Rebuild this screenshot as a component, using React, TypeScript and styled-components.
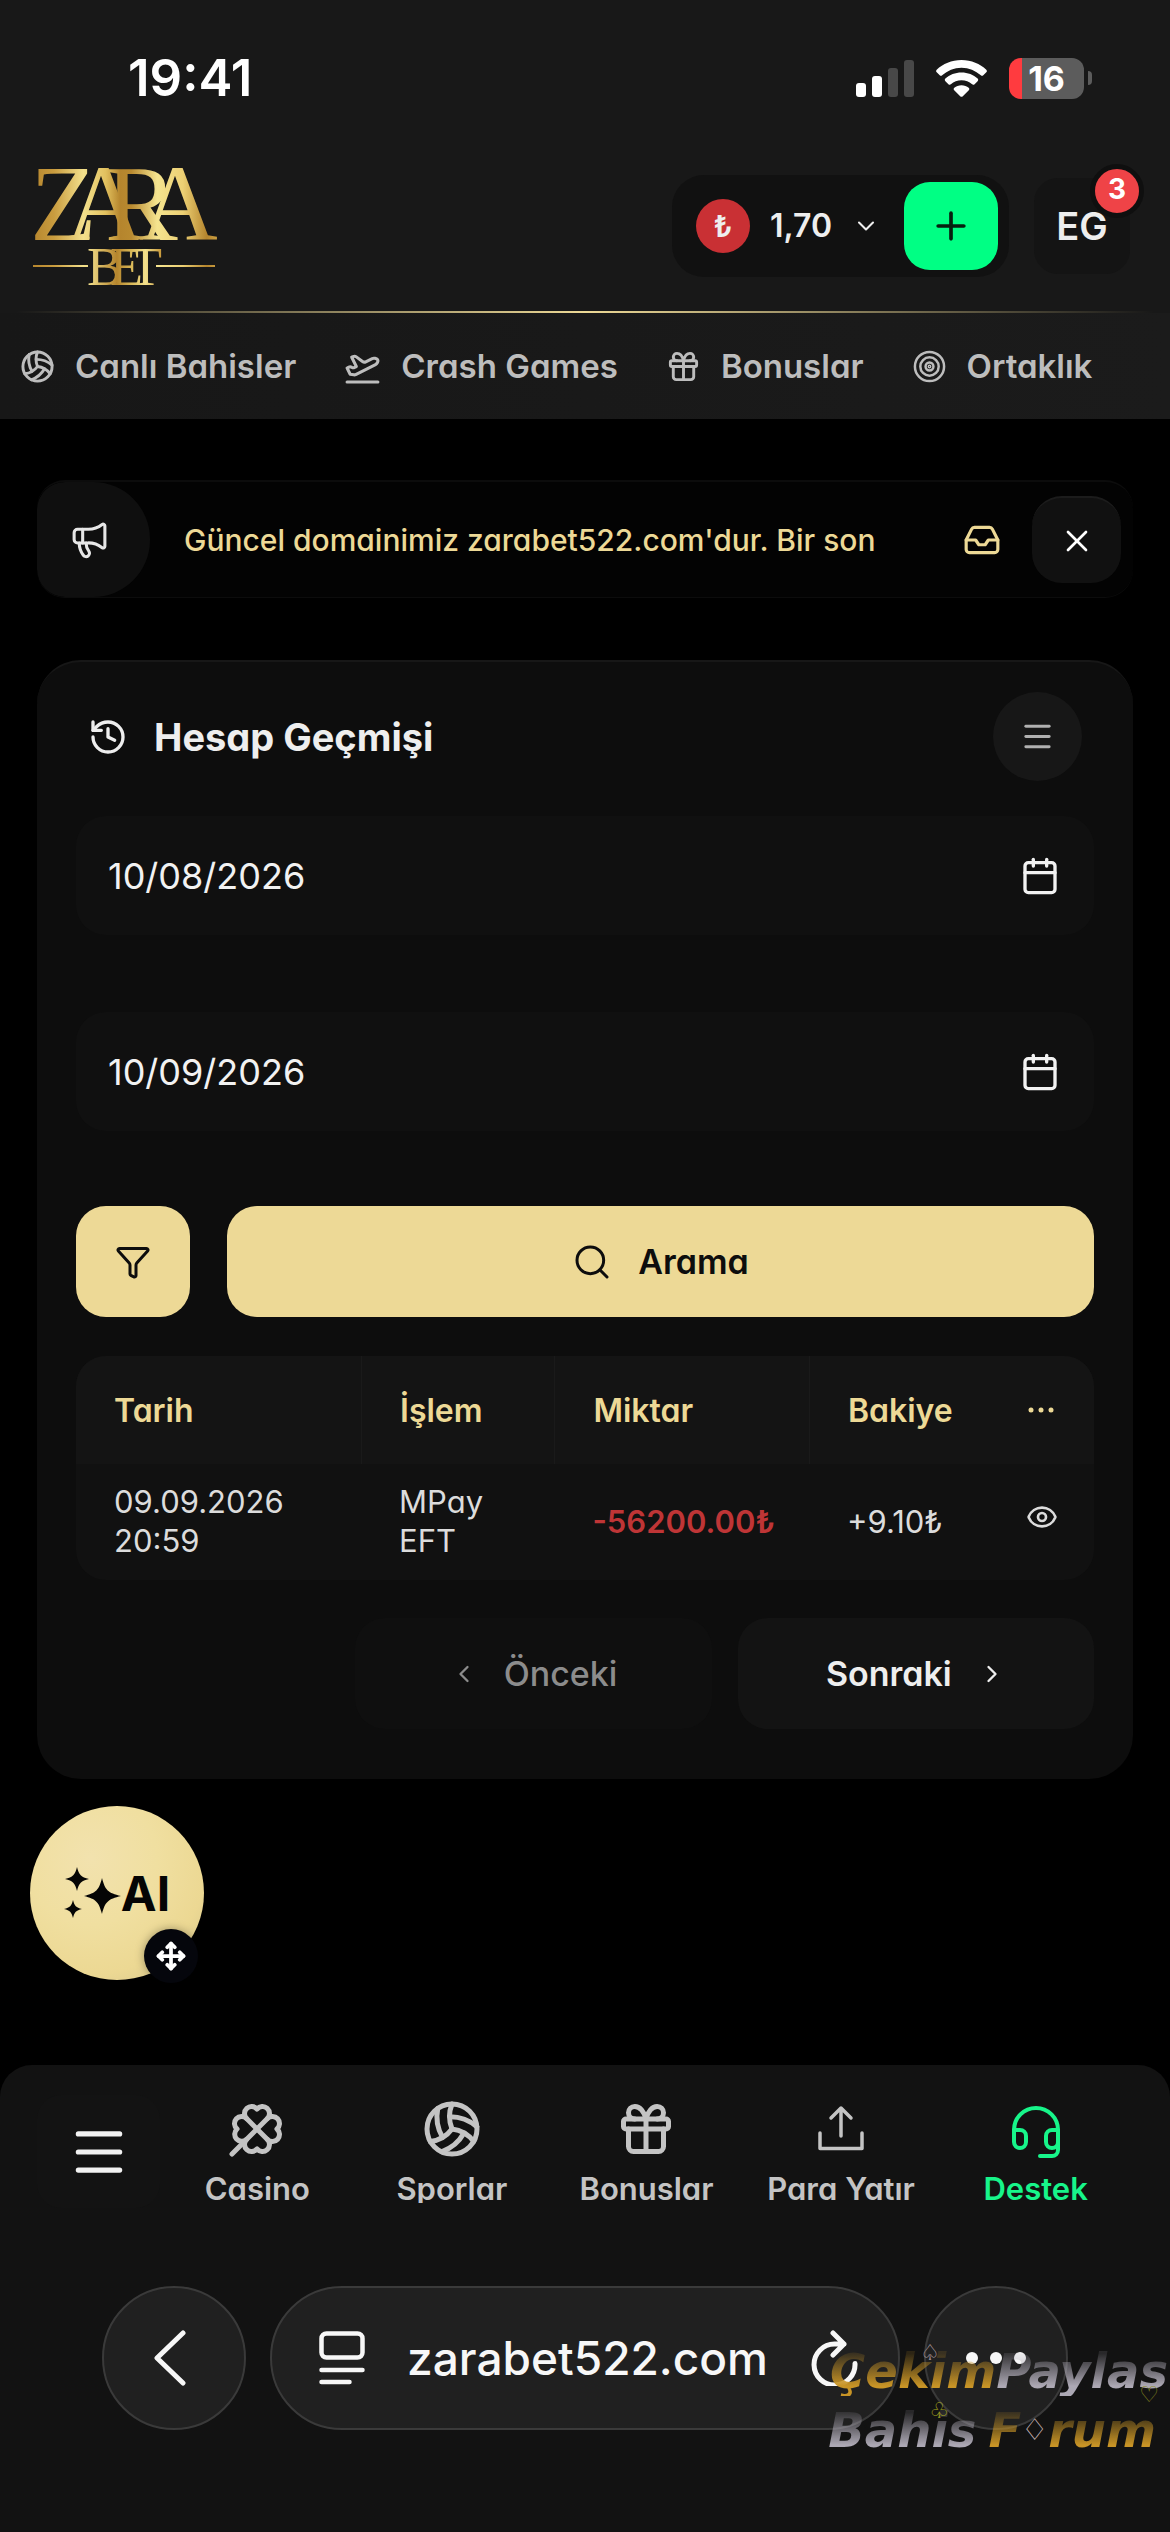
import React from "react";
import styled, { createGlobalStyle, css } from "styled-components";
import {
  Calendar,
  ChevronDown,
  ChevronLeft,
  ChevronRight,
  Clover,
  Eye,
  Funnel,
  Gift,
  History,
  Inbox,
  Megaphone,
  Menu,
  Move,
  PlaneTakeoff,
  Plus,
  Search,
  Volleyball,
  X,
} from "lucide-react";

const gold = "#edd996";
const green = "#00ff84";

const GlobalStyle = createGlobalStyle`
  *, *::before, *::after { box-sizing: border-box; }
  body {
    margin: 0;
    background: #000;
    color: #eee;
    font-family: Inter, "Liberation Sans", sans-serif;
    font-feature-settings: "cv11";
  }
  button, input {
    font: inherit;
    font-feature-settings: inherit;
    color: inherit;
    border: 0;
    padding: 0;
    margin: 0;
    background: none;
  }
  button { cursor: pointer; }
  a { color: inherit; text-decoration: none; }
  svg { display: block; flex: none; }
`;

const Page = styled.div`
  min-height: 100vh;
  display: flex;
  flex-direction: column;
  overflow: hidden;
`;

/* ---------- top ---------- */

const Top = styled.header`
  background: #181818;
`;

const StatusBar = styled.div`
  height: 140px;
  padding: 16px 78px 0 128px;
  display: flex;
  align-items: center;
  justify-content: space-between;
`;

const Clock = styled.span`
  font-size: 51px;
  font-weight: 600;
  line-height: 60px;
  color: #fff;
  font-feature-settings: normal;
`;

const StatusIcons = styled.div`
  display: flex;
  align-items: center;
  gap: 22px;
`;

const Battery = styled.div`
  display: flex;
  align-items: center;
  gap: 4px;
  &::after {
    content: "";
    width: 4px;
    height: 14px;
    border-radius: 0 8px 8px 0;
    background: #5c5c5c;
  }
`;

const BatteryBody = styled.div`
  width: 75px;
  height: 41px;
  border-radius: 12px;
  display: flex;
  align-items: center;
  justify-content: center;
  background: linear-gradient(90deg, #ff3b3f 13px, #5c5c5c 13px);
  color: #fff;
  font-size: 34px;
  font-weight: 700;
  line-height: 41px;
`;

const Bar = styled.div`
  height: 171px;
  padding: 0 40px 0 24px;
  display: flex;
  align-items: center;
  gap: 25px;
`;

const LogoLink = styled.a`
  margin-right: auto;
`;

const Wallet = styled.div`
  height: 102px;
  padding: 0 11px 0 24px;
  border-radius: 32px;
  background: #111;
  display: flex;
  align-items: center;
  gap: 24px;
`;

const Balance = styled.button`
  display: flex;
  align-items: center;
  gap: 20px;
  color: #eee;
  font-size: 32px;
  font-weight: 600;
`;

const Coin = styled.span`
  width: 54px;
  height: 54px;
  border-radius: 50%;
  background: #c93034;
  display: grid;
  place-items: center;
  font-size: 30px;
  line-height: 54px;
`;

const Deposit = styled.button`
  width: 94px;
  height: 88px;
  border-radius: 26px;
  background: ${green};
  color: #06210f;
  display: grid;
  place-items: center;
`;

const Profile = styled.button`
  position: relative;
  width: 96px;
  height: 96px;
  border-radius: 24px;
  background: #141414;
  color: #eee;
  font-size: 38px;
  font-weight: 600;
`;

const Badge = styled.span`
  position: absolute;
  top: -14px;
  right: -14px;
  width: 54px;
  height: 54px;
  border: 5px solid #0f0f0f;
  border-radius: 50%;
  background: #ef4347;
  color: #fff;
  font-size: 28px;
  font-weight: 700;
  line-height: 40px;
`;

const GoldLine = styled.div`
  height: 2px;
  margin: 0 16px;
  background: linear-gradient(90deg, transparent, ${gold} 50%, transparent);
`;

const QuickNav = styled.nav`
  height: 106px;
  padding: 0 20px;
  display: flex;
  align-items: center;
  gap: 48px;
  background: linear-gradient(90deg, #171717, #1b1b1b);
`;

const QuickLink = styled.a`
  display: flex;
  align-items: center;
  gap: 20px;
  color: #bdbdbd;
  font-size: 33px;
  font-weight: 600;
  line-height: 40px;
  white-space: nowrap;
`;

/* ---------- content ---------- */

const Main = styled.main`
  padding: 61px 37px 0;
`;

const Notice = styled.section`
  height: 118px;
  padding-right: 12px;
  border: solid #0c0c0c;
  border-width: 2px 0 1px;
  border-radius: 28px;
  background: #030303;
  display: flex;
  align-items: center;
  overflow: hidden;
`;

const NoticeTab = styled.span`
  align-self: stretch;
  width: 113px;
  padding-left: 32px;
  border-radius: 28px 57px 57px 28px;
  background: #0f0f0f;
  color: #e6e6e6;
  display: flex;
  align-items: center;
`;

const Ticker = styled.p`
  flex: 1;
  min-width: 0;
  margin: 0 84px 0 34px;
  overflow: hidden;
  white-space: nowrap;
  color: ${gold};
  font-size: 30px;
  font-weight: 500;
  line-height: 40px;
`;

const NoticeInbox = styled.button`
  margin-right: 31px;
  color: ${gold};
`;

const NoticeClose = styled.button`
  width: 89px;
  height: 87px;
  border-top: 2px solid #1c1c1c;
  border-radius: 30px;
  background: #111;
  color: #fff;
  display: grid;
  place-items: center;
`;

const Card = styled.section`
  margin-top: 62px;
  padding: 30px 39px 50px;
  border-top: 2px solid #171717;
  border-radius: 44px;
  background: #0d0d0d;
`;

const CardHead = styled.div`
  padding: 0 12px;
  display: flex;
  align-items: center;
  justify-content: space-between;
`;

const CardTitle = styled.h1`
  margin: 0;
  display: flex;
  align-items: center;
  gap: 26px;
  font-size: 38px;
  font-weight: 700;
  line-height: 46px;
`;

const CardMenu = styled.button`
  width: 89px;
  height: 89px;
  border-radius: 50%;
  background: #171717;
  color: #b0b0b0;
  display: grid;
  place-items: center;
`;

const Fields = styled.div`
  margin: 35px 0 75px;
  display: flex;
  flex-direction: column;
  gap: 77px;
`;

const Field = styled.label`
  height: 119px;
  padding: 0 34px 0 32px;
  border-radius: 30px;
  background: #101010;
  display: flex;
  align-items: center;
  color: #f2f2f2;
`;

const DateInput = styled.input`
  flex: 1;
  min-width: 0;
  outline: 0;
  font-size: 36px;
  line-height: 44px;
`;

const Actions = styled.div`
  display: flex;
  gap: 37px;
`;

const GoldButton = styled.button<{ $wide?: boolean }>`
  height: 111px;
  border-radius: 30px;
  background: ${gold};
  color: #0d0d0d;
  display: flex;
  align-items: center;
  justify-content: center;
  gap: 26px;
  font-size: 34px;
  font-weight: 600;
  ${(p) => (p.$wide ? css`flex: 1;` : css`width: 114px;`)}
`;

const Transactions = styled.table`
  width: 100%;
  margin-top: 39px;
  border-collapse: separate;
  border-spacing: 0;
  table-layout: fixed;
  border-radius: 30px;
  overflow: hidden;
  background: #111;
  text-align: left;
  line-height: 39px;
`;

const Col = styled.col<{ $share: number }>`
  width: ${(p) => p.$share}%;
`;

const HeadCell = styled.th`
  height: 108px;
  padding: 0 0 0 38px;
  background: #141414;
  color: ${gold};
  font-size: 32px;
  font-weight: 600;
  & + & { border-left: 1px solid #1a1a1a; }
  &:last-child { border-left: 0; padding-left: 46px; }
`;

const Cell = styled.td<{ $negative?: boolean }>`
  height: 116px;
  padding: 0 0 2px 38px;
  color: ${(p) => (p.$negative ? "#bf3536" : "#dcdcdc")};
  font-size: 31px;
  font-weight: ${(p) => (p.$negative ? 600 : 400)};
  &:last-child { padding-left: 44px; }
`;

const Lines = styled.span`
  display: block;
  white-space: pre-line;
`;

const Pager = styled.div`
  margin-top: 38px;
  display: flex;
  justify-content: flex-end;
  gap: 26px;
`;

const PageButton = styled.button`
  width: 35%;
  height: 111px;
  border-radius: 30px;
  background: #131313;
  color: #eee;
  display: flex;
  align-items: center;
  justify-content: center;
  gap: 26px;
  font-size: 34px;
  font-weight: 600;
  &:disabled {
    background: #0f0f0f;
    color: #8c8c8c;
    font-weight: 500;
    cursor: default;
  }
`;

const Assistant = styled.button`
  position: relative;
  width: 174px;
  height: 174px;
  margin: 27px 0 0 -7px;
  border-radius: 50%;
  background: radial-gradient(circle at 35% 30%, #f2e2ae 0%, #f0dfa0 40%, #ecd893 70%, #cfc08a 100%);
  color: #050505;
  display: flex;
  align-items: center;
  justify-content: center;
  font-size: 48px;
  font-weight: 700;
`;

const DragHandle = styled.span`
  position: absolute;
  right: 6px;
  bottom: -3px;
  width: 54px;
  height: 54px;
  border-radius: 50%;
  background: #05060c;
  box-shadow: 0 0 10px rgba(0, 0, 0, 0.35);
  color: #fff;
  display: grid;
  place-items: center;
`;

/* ---------- bottom ---------- */

const Bottom = styled.footer`
  margin-top: auto;
  border-radius: 32px 32px 0 0;
  background: #121212;
`;

const TabBar = styled.nav`
  padding: 30px 37px 0;
  display: flex;
  align-items: flex-start;
`;

const MenuButton = styled.button`
  width: 123px;
  height: 113px;
  border-radius: 24px;
  background: #131313;
  color: #f2f2f2;
  display: grid;
  place-items: center;
`;

const Tab = styled.a<{ $active?: boolean }>`
  flex: 1;
  height: 108px;
  padding-top: 4px;
  overflow: hidden;
  display: flex;
  flex-direction: column;
  align-items: center;
  gap: 10px;
  color: ${(p) => (p.$active ? "#17f58a" : "#c4c4c4")};
  font-size: 31px;
  font-weight: 600;
  line-height: 40px;
  white-space: nowrap;
`;

const Browser = styled.div`
  position: relative;
  margin-top: 78px;
  padding: 0 102px 102px;
  display: flex;
  gap: 24px;
`;

const glass = css`
  height: 144px;
  border: 2px solid #3a3a3a;
  border-radius: 72px;
  background: #202020;
  color: #f7f7f7;
  display: flex;
  align-items: center;
`;

const RoundButton = styled.button`
  ${glass}
  width: 144px;
  justify-content: center;
`;

const AddressBar = styled.div`
  ${glass}
  flex: 1;
  padding: 0 40px 0 47px;
  justify-content: space-between;
`;

const Address = styled.span`
  font-size: 46px;
  font-weight: 500;
  line-height: 56px;
  font-feature-settings: normal;
`;

const Watermark = styled.div`
  position: absolute;
  top: 60px;
  right: 2px;
  display: grid;
  justify-items: end;
  row-gap: 9px;
  font-family: "DejaVu Sans", sans-serif;
  font-style: italic;
  font-weight: 700;
  font-size: 48px;
  line-height: 50px;
  pointer-events: none;
`;

const MarkLine = styled.div<{ $inset?: boolean }>`
  padding-right: ${(p) => (p.$inset ? "12px" : "0")};
  display: flex;
  align-items: center;
  white-space: nowrap;
`;

const Mark = styled.span<{ $tone: "gold" | "silver"; $spaced?: boolean }>`
  color: transparent;
  margin-right: ${(p) => (p.$spaced ? "12px" : "0")};
  background: ${(p) =>
    p.$tone === "gold"
      ? "linear-gradient(rgba(200,148,38,0.15) 15%, #c89426 80%)"
      : "linear-gradient(rgba(172,168,180,0.15) 15%, #aca8b4 80%)"};
  background-clip: text;
  -webkit-background-clip: text;
`;

const Suit = styled.span<{ $x: number; $y: number; $color: string }>`
  position: absolute;
  left: ${(p) => p.$x}px;
  top: ${(p) => p.$y}px;
  color: ${(p) => p.$color};
  font-style: normal;
  font-weight: 400;
  font-size: 22px;
  line-height: 22px;
`;

const Diamond = styled.span`
  color: #cbb8b8;
  font-style: normal;
  font-weight: 400;
  font-size: 30px;
`;

/* ---------- drawings ---------- */

const Signal = () => (
  <svg width="58" height="37" viewBox="0 0 58 37" fill="#fff">
    <rect x="0" y="23" width="10" height="14" rx="3" />
    <rect x="16" y="16" width="10" height="21" rx="3" />
    <rect x="32" y="8" width="10" height="29" rx="3" fill="#484848" />
    <rect x="48" y="0" width="10" height="37" rx="3" fill="#484848" />
  </svg>
);

const Wifi = () => (
  <svg width="51" height="37" viewBox="0 0 51 37" fill="#fff">
    <path d="M25.500 0C35.500 0 44 3.800 50.300 9.700c.8.8.8 1.900 0 2.600l-3 3c-.7.700-1.800.7-2.500 0C39.500 10.600 33 7.700 25.500 7.700S11.500 10.600 6.200 15.300c-.7.700-1.800.7-2.500 0l-3-3c-.8-.7-.8-1.800 0-2.600C7 3.800 15.500 0 25.500 0z" />
    <path d="M25.500 12.500c6.300 0 11.900 2.300 16.100 6.100.8.7.8 1.900 0 2.600l-3 3c-.7.700-1.800.700-2.500.1-2.900-2.500-6.500-4-10.600-4s-7.700 1.500-10.600 4c-.7.600-1.800.6-2.500-.1l-3-3c-.8-.7-.8-1.900 0-2.600 4.200-3.800 9.800-6.100 16.100-6.100z" />
    <path d="M25.500 25.200c2.800 0 5.300 1 7.200 2.600.8.700.8 1.800.1 2.500l-6 6c-.7.700-1.900.7-2.600 0l-6-6c-.7-.7-.7-1.800.1-2.500 1.900-1.600 4.400-2.600 7.200-2.600z" />
  </svg>
);

const Logo = () => (
  <svg width="204" height="170" viewBox="-8 -24 204 170" role="img" aria-label="Zara Bet">
    <defs>
      <linearGradient id="foil" gradientUnits="userSpaceOnUse" x1="0" y1="0" x2="184" y2="0">
        <stop offset="0" stopColor="#b5852d" />
        <stop offset="0.12" stopColor="#c99c3f" />
        <stop offset="0.28" stopColor="#f3e08c" />
        <stop offset="0.4" stopColor="#e2c15f" />
        <stop offset="0.48" stopColor="#b5852d" />
        <stop offset="0.54" stopColor="#b98a30" />
        <stop offset="0.68" stopColor="#f5e48f" />
        <stop offset="0.82" stopColor="#ecd074" />
        <stop offset="0.95" stopColor="#b5852d" />
        <stop offset="1" stopColor="#c99c3f" />
      </linearGradient>
      <linearGradient id="foilSmall" gradientUnits="userSpaceOnUse" x1="56" y1="0" x2="128" y2="0">
        <stop offset="0" stopColor="#f3e08c" />
        <stop offset="0.4" stopColor="#b5852d" />
        <stop offset="0.6" stopColor="#d9b857" />
        <stop offset="0.8" stopColor="#f3e08c" />
        <stop offset="1" stopColor="#c99c3f" />
      </linearGradient>
    </defs>
    <g fill="url(#foil)" fontFamily="Liberation Serif, serif" fontSize="109">
      <text x="-2" y="75">Z</text>
      <text x="33" y="75">A</text>
      <text x="73" y="75">R</text>
      <text x="107" y="75">A</text>
    </g>
    <g fill="url(#foilSmall)" fontFamily="Liberation Serif, serif" fontSize="54">
      <text x="55" y="120">B</text>
      <text x="78" y="120">E</text>
      <text x="97" y="120">T</text>
    </g>
    <rect x="1" y="100" width="55" height="2" fill="url(#foil)" />
    <rect x="124" y="100" width="59" height="2" fill="url(#foil)" />
  </svg>
);

const Rings = () => (
  <svg width="35" height="35" viewBox="0 0 24 24" fill="none" stroke="currentColor" strokeWidth="1.7">
    <circle cx="12" cy="12" r="10" />
    <circle cx="12" cy="12" r="6.300" />
    <circle cx="12" cy="12" r="2.700" />
    <circle cx="12" cy="12" r="0.500" />
  </svg>
);

const Dots = () => (
  <svg width="26" height="6" viewBox="0 0 26 6" fill="currentColor">
    <circle cx="3" cy="3" r="2.500" />
    <circle cx="13" cy="3" r="2.500" />
    <circle cx="23" cy="3" r="2.500" />
  </svg>
);

const Stars = () => (
  <svg width="57" height="53" viewBox="0 0 57 53" fill="currentColor">
    <path d="M38 11c3 12 6 15 19 18-13 3-16 6-19 18-3-12-6-15-18-18 12-3 15-6 18-18z" />
    <path d="M13 0c2 8 4 10 12 12-8 2-10 4-12 12-2-8-4-10-12-12 8-2 10-4 12-12z" />
    <path d="M9 33c1.500 6 3 7.500 9 9-6 1.500-7.500 3-9 9-1.500-6-3-7.500-9-9 6-1.500 7.500-3 9-9z" />
  </svg>
);

const Upload = () => (
  <svg width="60" height="60" viewBox="0 0 60 60" fill="none" stroke="currentColor" strokeWidth="3.500" strokeLinecap="round" strokeLinejoin="round">
    <path d="M30 37V9M20 19 30 9l10 10M9 34v15.500h42V34" />
  </svg>
);

const Headset = () => (
  <svg width="60" height="60" viewBox="0 0 60 60" fill="none" stroke="currentColor" strokeWidth="4" strokeLinecap="round" strokeLinejoin="round">
    <path d="M8 31a22 22 0 0 1 44 0v20a6 6 0 0 1-6 6H34" />
    <path d="M8 31h6a6 6 0 0 1 6 6v6a6 6 0 0 1-12 0zM52 31h-6a6 6 0 0 0-6 6v6a6 6 0 0 0 12 0" />
  </svg>
);

const Back = () => (
  <svg width="42" height="56" viewBox="0 0 42 56" fill="none" stroke="currentColor" strokeWidth="5" strokeLinecap="round" strokeLinejoin="round">
    <path d="M30 3 4 28l26 25" />
  </svg>
);

const Reader = () => (
  <svg width="46" height="54" viewBox="0 0 46 54" fill="none" stroke="currentColor" strokeWidth="4.500" strokeLinecap="round">
    <rect x="2.500" y="2.500" width="41" height="24" rx="5" />
    <path d="M2.500 39h41M2.500 51h28" />
  </svg>
);

const Reload = () => (
  <svg width="48" height="56" viewBox="0 0 48 56" fill="none" stroke="currentColor" strokeWidth="5" strokeLinecap="round" strokeLinejoin="round">
    <path d="M34 14H24.500a20.500 20.500 0 1 0 20.500 19.500M23 3l11 11-11 11" />
  </svg>
);

const Ellipsis = () => (
  <svg width="60" height="12" viewBox="0 0 60 12" fill="currentColor">
    <circle cx="6" cy="6" r="6" />
    <circle cx="30" cy="6" r="6" />
    <circle cx="54" cy="6" r="6" />
  </svg>
);

/* ---------- data ---------- */

const quickLinks = [
  { label: "Canlı Bahisler", icon: <Volleyball size={35} /> },
  { label: "Crash Games", icon: <PlaneTakeoff size={37} /> },
  { label: "Bonuslar", icon: <Gift size={35} /> },
  { label: "Ortaklık", icon: <Rings /> },
];

const tabs = [
  { label: "Casino", icon: <Clover size={60} /> },
  { label: "Sporlar", icon: <Volleyball size={60} /> },
  { label: "Bonuslar", icon: <Gift size={60} /> },
  { label: "Para Yatır", icon: <Upload /> },
  { label: "Destek", icon: <Headset />, active: true },
];

const rows = [
  { date: "09.09.2026\n20:59", type: "MPay\nEFT", amount: "-56200.00₺", balance: "+9.10₺" },
];

const columns = [28, 19, 25, 17, 11];

export default function App() {
  return (
    <Page>
      <GlobalStyle />
      <Top>
        <StatusBar>
          <Clock>19:41</Clock>
          <StatusIcons>
            <Signal />
            <Wifi />
            <Battery>
              <BatteryBody>16</BatteryBody>
            </Battery>
          </StatusIcons>
        </StatusBar>
        <Bar>
          <LogoLink href="#home">
            <Logo />
          </LogoLink>
          <Wallet>
            <Balance type="button">
              <Coin>₺</Coin>
              1,70
              <ChevronDown size={28} strokeWidth={1.8} />
            </Balance>
            <Deposit type="button" aria-label="Para Yatır">
              <Plus size={44} />
            </Deposit>
          </Wallet>
          <Profile type="button">
            EG
            <Badge>3</Badge>
          </Profile>
        </Bar>
        <GoldLine />
        <QuickNav>
          {quickLinks.map((link) => (
            <QuickLink key={link.label} href="#">
              {link.icon}
              {link.label}
            </QuickLink>
          ))}
        </QuickNav>
      </Top>

      <Main>
        <Notice>
          <NoticeTab>
            <Megaphone size={41} strokeWidth={1.8} />
          </NoticeTab>
          <Ticker>Güncel domainimiz zarabet522.com'dur. Bir son</Ticker>
          <NoticeInbox type="button" aria-label="Mesajlar">
            <Inbox size={38} />
          </NoticeInbox>
          <NoticeClose type="button" aria-label="Kapat">
            <X size={36} strokeWidth={1.8} />
          </NoticeClose>
        </Notice>

        <Card>
          <CardHead>
            <CardTitle>
              <History size={40} strokeWidth={2} />
              Hesap Geçmişi
            </CardTitle>
            <CardMenu type="button" aria-label="Menü">
              <Menu size={35} />
            </CardMenu>
          </CardHead>

          <Fields>
            <Field>
              <DateInput defaultValue="10/08/2026" aria-label="Başlangıç tarihi" />
              <Calendar size={40} />
            </Field>
            <Field>
              <DateInput defaultValue="10/09/2026" aria-label="Bitiş tarihi" />
              <Calendar size={40} />
            </Field>
          </Fields>

          <Actions>
            <GoldButton type="button" aria-label="Filtre">
              <Funnel size={36} strokeWidth={2} />
            </GoldButton>
            <GoldButton type="button" $wide>
              <Search size={40} strokeWidth={1.8} />
              Arama
            </GoldButton>
          </Actions>

          <Transactions>
            <colgroup>
              {columns.map((share, i) => (
                <Col key={i} $share={share} />
              ))}
            </colgroup>
            <thead>
              <tr>
                <HeadCell>Tarih</HeadCell>
                <HeadCell>İşlem</HeadCell>
                <HeadCell>Miktar</HeadCell>
                <HeadCell>Bakiye</HeadCell>
                <HeadCell aria-label="Detay">
                  <Dots />
                </HeadCell>
              </tr>
            </thead>
            <tbody>
              {rows.map((row) => (
                <tr key={row.date}>
                  <Cell>
                    <Lines>{row.date}</Lines>
                  </Cell>
                  <Cell>
                    <Lines>{row.type}</Lines>
                  </Cell>
                  <Cell $negative>{row.amount}</Cell>
                  <Cell>{row.balance}</Cell>
                  <Cell>
                    <button type="button" aria-label="Göster">
                      <Eye size={32} />
                    </button>
                  </Cell>
                </tr>
              ))}
            </tbody>
          </Transactions>

          <Pager>
            <PageButton type="button" disabled>
              <ChevronLeft size={28} />
              Önceki
            </PageButton>
            <PageButton type="button">
              Sonraki
              <ChevronRight size={28} />
            </PageButton>
          </Pager>
        </Card>

        <Assistant type="button">
          <Stars />
          AI
          <DragHandle>
            <Move size={30} strokeWidth={3} />
          </DragHandle>
        </Assistant>
      </Main>

      <Bottom>
        <TabBar>
          <MenuButton type="button" aria-label="Menü">
            <Menu size={62} />
          </MenuButton>
          {tabs.map((tab) => (
            <Tab key={tab.label} href="#" $active={tab.active}>
              {tab.icon}
              {tab.label}
            </Tab>
          ))}
        </TabBar>
        <Browser>
          <RoundButton type="button" aria-label="Geri">
            <Back />
          </RoundButton>
          <AddressBar>
            <Reader />
            <Address>zarabet522.com</Address>
            <Reload />
          </AddressBar>
          <RoundButton type="button" aria-label="Diğer">
            <Ellipsis />
          </RoundButton>
          <Watermark>
            <MarkLine>
              <Mark $tone="gold">Çekim</Mark>
              <Mark $tone="silver">Paylas</Mark>
            </MarkLine>
            <MarkLine $inset>
              <Mark $tone="silver" $spaced>Bahis</Mark>
              <Mark $tone="gold">F</Mark>
              <Diamond>♢</Diamond>
              <Mark $tone="gold">rum</Mark>
            </MarkLine>
            <Suit $x={92} $y={-4} $color="#b3a0a4">♤</Suit>
            <Suit $x={101} $y={54} $color="#a8a81e">♧</Suit>
            <Suit $x={311} $y={38} $color="#8a8a20">♡</Suit>
          </Watermark>
        </Browser>
      </Bottom>
    </Page>
  );
}
